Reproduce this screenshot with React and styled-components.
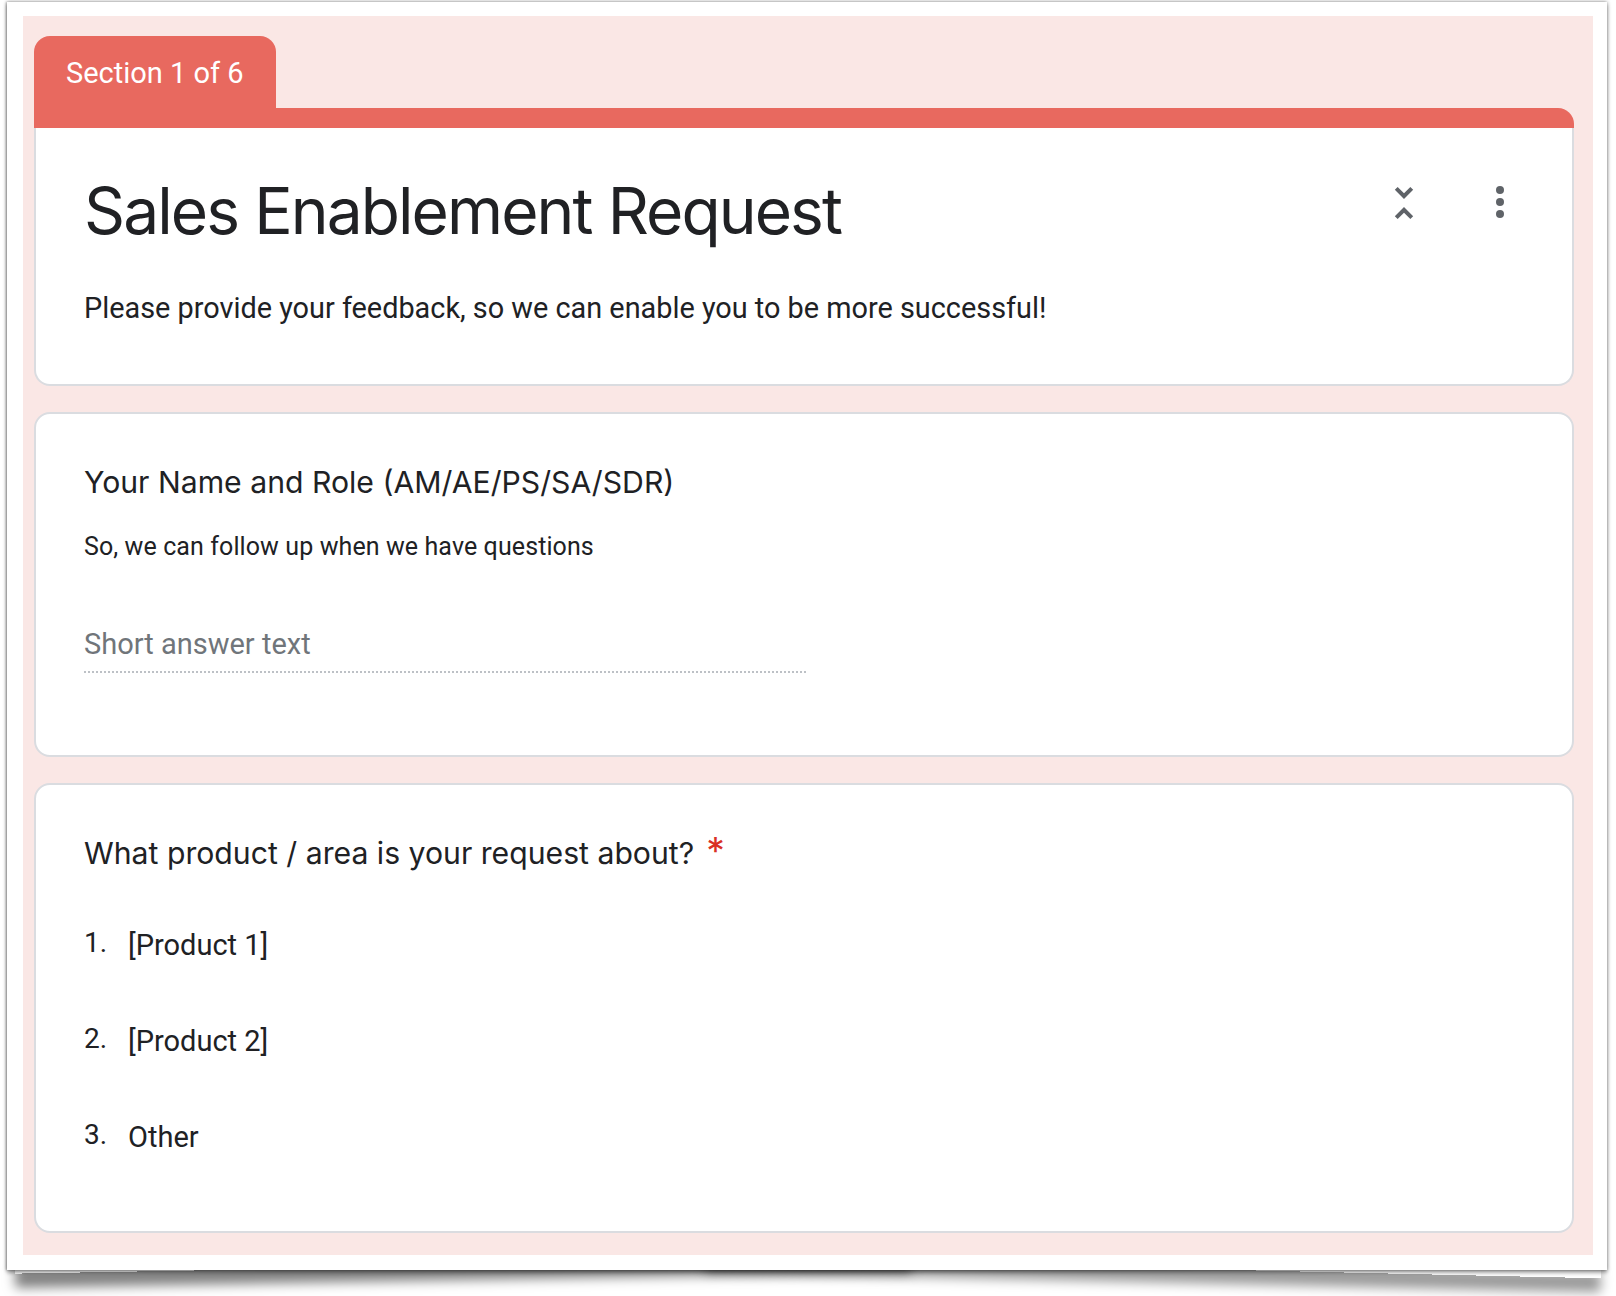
import React from "react";
import styled, { createGlobalStyle } from "styled-components";

const Global = createGlobalStyle`
  html { background: #ffffff; }
  html, body { margin: 0; padding: 0; }
  body { font-family: Roboto, "Noto Sans", Arial, sans-serif; color: #202124; }
  * { box-sizing: border-box; }
`;

const Page = styled.div`
  position: relative;
  z-index: 0;
  padding: 2px 9px 28px 7px;
`;

const Frame = styled.div`
  position: relative;
  width: 1600px;
  padding: 14px 14px 15px 16px;
  background: #ffffff;
  box-shadow: 0 0 4px rgba(0, 0, 0, 0.4), -1px 0 2px rgba(0, 0, 0, 0.2),
    0 3px 4px rgba(0, 0, 0, 0.3);

  &::before,
  &::after {
    content: "";
    position: absolute;
    z-index: -1;
    bottom: 12px;
    width: 56%;
    height: 20px;
    box-shadow: 0 14px 12px rgba(0, 0, 0, 0.5);
  }
  &::before {
    left: 8px;
    transform-origin: right bottom;
    transform: rotate(-1deg);
  }
  &::after {
    right: 6px;
    transform-origin: left bottom;
    transform: rotate(1.3deg);
    box-shadow: 0 14px 12px rgba(0, 0, 0, 0.4);
  }
`;

const Canvas = styled.div`
  background: #fae7e5;
  padding: 20px 19px 22px 11px;
  display: flex;
  flex-direction: column;
  gap: 26px;
`;

const SectionBlock = styled.div`
  display: flex;
  flex-direction: column;
`;

const Tab = styled.div`
  align-self: flex-start;
  height: 72px;
  padding: 2px 32px 0 32px;
  display: flex;
  align-items: center;
  background: #e8695f;
  color: #ffffff;
  font-family: Roboto, sans-serif;
  font-size: 29px;
  border-radius: 16px 16px 0 0;
`;

const TopBar = styled.div`
  height: 20px;
  background: #e8695f;
  border-radius: 0 16px 0 0;
`;

const HeaderCard = styled.div`
  background: #ffffff;
  border: 2px solid #dadce0;
  border-top: none;
  border-radius: 0 0 16px 16px;
  padding: 45px 48px 56px 48px;
`;

const HeaderRow = styled.div`
  display: flex;
  align-items: flex-start;
  justify-content: space-between;
`;

const FormTitle = styled.h1`
  margin: 0;
  font-family: Inter, "Noto Sans", sans-serif;
  font-weight: 400;
  font-size: 64px;
  line-height: 76px;
  letter-spacing: -1.9px;
  color: #202124;
`;

const IconGroup = styled.div`
  display: flex;
  gap: 48px;
  margin-top: 6px;
`;

const IconBox = styled.div`
  width: 48px;
  height: 48px;
  display: flex;
  margin-top: ${(p) => p.$dy || 0}px;
  svg { width: 48px; height: 48px; fill: #5f6368; }
`;

const FormDesc = styled.p`
  margin: 39px 0 0;
  font-family: Roboto, sans-serif;
  font-size: 28.85px;
  line-height: 40px;
  color: #202124;
`;

const QuestionCard = styled.div`
  background: #ffffff;
  border: 2px solid #dadce0;
  border-radius: 16px;
  padding: 48px 48px ${(p) => p.$pb}px 48px;
`;

const QTitle = styled.div`
  font-family: Inter, "Noto Sans", sans-serif;
  font-size: 30.2px;
  line-height: 40px;
  color: #202124;
`;

const Required = styled.span`
  color: #d93025;
  padding-left: 12px;
  font-size: 37px;
  line-height: 0;
`;

const QDesc = styled.div`
  margin-top: 27px;
  font-family: Roboto, sans-serif;
  font-size: 25px;
  letter-spacing: 0.1px;
  line-height: 36px;
  color: #202124;
`;

const AnswerField = styled.div`
  margin-top: 59px;
  width: 722px;
  padding-bottom: 7px;
  border-bottom: 2px dotted #bdc1c6;
  font-family: Roboto, sans-serif;
  font-size: 29px;
  line-height: 40px;
  color: #70757a;
`;

const OptionList = styled.ol`
  list-style: none;
  margin: 24px 0 0;
  padding: 0;
`;

const OptionRow = styled.li`
  height: 96px;
  display: flex;
  align-items: center;
  font-family: Roboto, sans-serif;
  font-size: 29px;
  color: #202124;
`;

const OptionNum = styled.span`
  width: 44px;
  flex: none;
  font-size: 28px;
  margin-bottom: 6px;
`;

const UnfoldLess = () => (
  <svg viewBox="0 0 24 24">
    <path d="M7.41 18.59L8.83 20 12 16.83 15.17 20l1.41-1.41L12 14l-4.59 4.59zm9.18-13.18L15.17 4 12 7.17 8.83 4 7.41 5.41 12 10l4.59-4.59z" />
  </svg>
);

const MoreVert = () => (
  <svg viewBox="0 0 24 24">
    <circle cx="12" cy="6" r="2" />
    <circle cx="12" cy="12" r="2" />
    <circle cx="12" cy="18" r="2" />
  </svg>
);

const options = ["[Product 1]", "[Product 2]", "Other"];

export default function App() {
  return (
    <>
      <Global />
      <Page>
        <Frame>
          <Canvas>
            <SectionBlock>
              <Tab>Section 1 of 6</Tab>
              <TopBar />
              <HeaderCard>
                <HeaderRow>
                  <FormTitle>Sales Enablement Request</FormTitle>
                  <IconGroup>
                    <IconBox>
                      <UnfoldLess />
                    </IconBox>
                    <IconBox $dy={-1}>
                      <MoreVert />
                    </IconBox>
                  </IconGroup>
                </HeaderRow>
                <FormDesc>
                  Please provide your feedback, so we can enable you to be more successful!
                </FormDesc>
              </HeaderCard>
            </SectionBlock>

            <QuestionCard $pb={82}>
              <QTitle>Your Name and Role (AM/AE/PS/SA/SDR)</QTitle>
              <QDesc>So, we can follow up when we have questions</QDesc>
              <AnswerField>Short answer text</AnswerField>
            </QuestionCard>

            <QuestionCard $pb={46}>
              <QTitle>
                What product / area is your request about?<Required>*</Required>
              </QTitle>
              <OptionList>
                {options.map((o, i) => (
                  <OptionRow key={o}>
                    <OptionNum>{i + 1}.</OptionNum>
                    {o}
                  </OptionRow>
                ))}
              </OptionList>
            </QuestionCard>
          </Canvas>
        </Frame>
      </Page>
    </>
  );
}
